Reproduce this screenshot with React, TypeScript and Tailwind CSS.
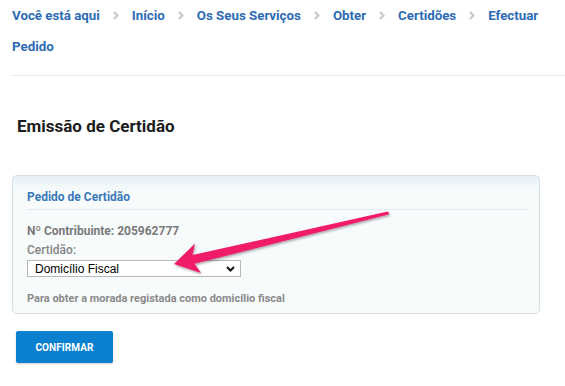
import React from "react";

const crumbs = ["Você está aqui", "Início", "Os Seus Serviços", "Obter", "Certidões", "Efectuar Pedido"];

function Sep() {
  return (
    <svg width="6" height="9" viewBox="0 0 6 9" className="mx-[13px] shrink-0">
      <path d="M1 1 L4.5 4.5 L1 8" stroke="#c6c6c6" strokeWidth="2" fill="none" />
    </svg>
  );
}

export default function App() {
  const font = { fontFamily: "Roboto, 'Noto Sans', Arial, sans-serif" };
  return (
    <div className="relative w-[565px] h-[386px] bg-white overflow-hidden pl-[12px]" style={font}>
      <nav className="flex flex-wrap items-center text-[13.3px] font-bold leading-[31px] text-[#2d6bb6]">
        {crumbs.map((c, i) => (
          <React.Fragment key={i}>
            {i === crumbs.length - 1 ? (
              <>
                <span>Efectuar</span>
                <span className="basis-full h-0" />
                <span>Pedido</span>
              </>
            ) : (
              <span className="whitespace-nowrap">{c}</span>
            )}
            {i < crumbs.length - 1 && <Sep />}
          </React.Fragment>
        ))}
      </nav>
      <div className="mt-[13px] border-t border-[#e8e8e8]" />

      <h1 className="mt-[40px] ml-[5px] text-[17px] leading-[21px] font-bold text-[#1c1c1c]">Emissão de Certidão</h1>

      <div className="mt-[38px] w-[528px] h-[139px] rounded-[5px] border border-[#d6dfe4] bg-[#f8fbfc] shadow-[inset_0_14px_12px_-8px_#e4eef4] pl-[14px] pr-[11px]">
        <div className="pt-[13px] pb-[4px] border-b border-[#e3ebef] text-[12px] leading-[16px] font-bold text-[#3a78b8]">
          Pedido de Certidão
        </div>
        <div className="mt-[13px] text-[12px] leading-[16px] font-bold text-[#7a7a7a]">Nº Contribuinte: 205962777</div>
        <div className="mt-[3px] text-[12px] leading-[16px] font-medium text-[#858585]">Certidão:</div>
        <div
          className="mt-[2px] w-[214px] h-[17px] border border-[#b9b9b9] bg-white flex items-center justify-between pl-[7px] pr-[5px] text-[12px] text-black"
          style={{ fontFamily: "'Liberation Sans', Arial, sans-serif" }}
        >
          <span>Domicílio Fiscal</span>
          <svg width="9" height="6" viewBox="0 0 9 6">
            <path d="M1 1 L4.5 4.5 L8 1" stroke="#111" strokeWidth="2" fill="none" />
          </svg>
        </div>
        <div className="mt-[15px] text-[11px] leading-[14px] font-bold text-[#8a8a8a]">
          Para obter a morada registada como domicílio fiscal
        </div>
      </div>

      <button className="mt-[17px] ml-[4px] w-[97px] h-[32px] rounded-[2px] bg-[#0b80cf] text-white text-[10px] font-bold tracking-[0.1px] shadow-[0_1px_2px_rgba(0,0,0,0.2)]">
        CONFIRMAR
      </button>

      <svg className="absolute left-0 top-0 pointer-events-none" width="565" height="386" viewBox="0 0 565 386">
        <defs>
          <filter id="sh" x="-10%" y="-30%" width="120%" height="160%">
            <feDropShadow dx="1" dy="1.5" stdDeviation="1.2" floodColor="#000" floodOpacity="0.35" />
          </filter>
        </defs>
        <path
          d="M174 264 L195 243.5 L192.5 255 L387.7 211.5 Q390 213 388.4 214.5 L194.5 263.8 L201 273 Z"
          fill="#f01d69"
          filter="url(#sh)"
        />
      </svg>
    </div>
  );
}
